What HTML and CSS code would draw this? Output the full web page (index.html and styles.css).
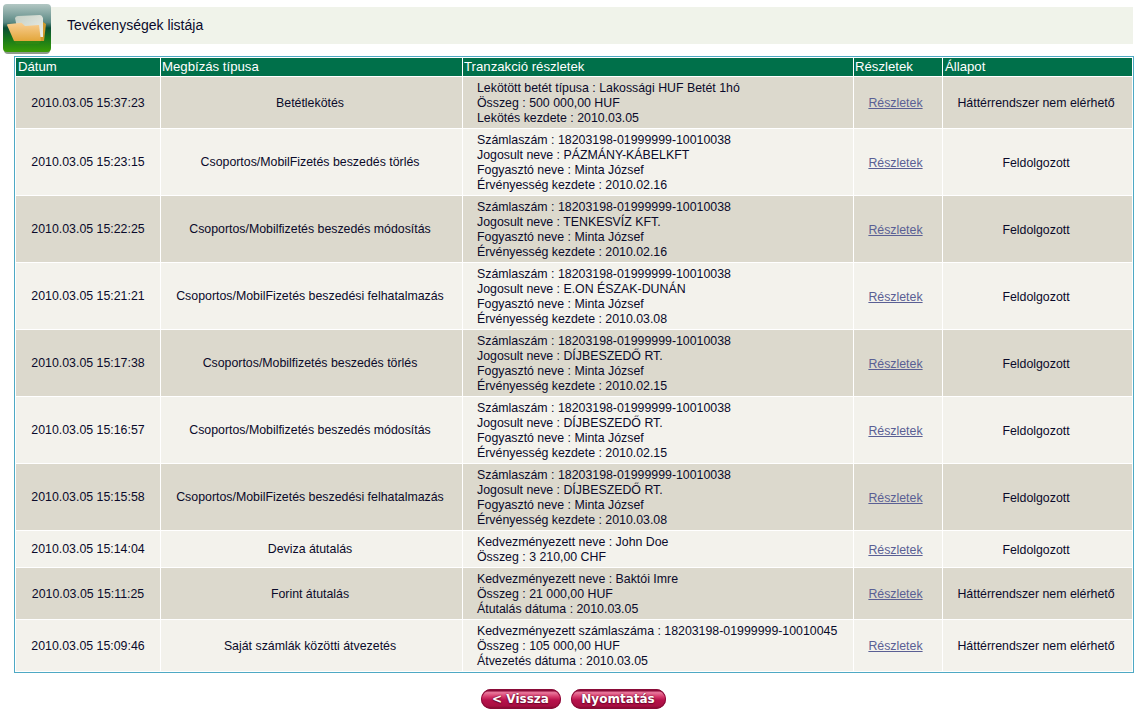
FILE: index.html
```html
<!DOCTYPE html>
<html lang="hu">
<head>
   <meta charset="UTF-8">
   <title>Tevékenységek listája</title>
   <link rel="stylesheet" href="styles.css">
</head>
<body>
   <div class="title-row">
       <div class="title-icon">
           <svg width="48" height="50" viewBox="0 0 48 50">
               <defs>
                   <linearGradient id="tile" x1="0" y1="0" x2="0" y2="1">
                       <stop offset="0" stop-color="#b2c7c3"/>
                       <stop offset="0.38" stop-color="#5d8a85"/>
                       <stop offset="0.5" stop-color="#0a4d36"/>
                       <stop offset="0.72" stop-color="#17761c"/>
                       <stop offset="1" stop-color="#3a9c05"/>
                   </linearGradient>
                   <linearGradient id="folder" x1="0" y1="0" x2="0" y2="1">
                       <stop offset="0" stop-color="#f9cf94"/>
                       <stop offset="1" stop-color="#e3a63a"/>
                   </linearGradient>
                   <linearGradient id="paper" x1="0" y1="0" x2="1" y2="1">
                       <stop offset="0" stop-color="#c4cfc4"/>
                       <stop offset="1" stop-color="#eef0ea"/>
                   </linearGradient>
               </defs>
               <rect x="1" y="2" width="46" height="48" rx="4" fill="#8d9a8d"/>
               <rect x="0" y="0" width="48" height="48" rx="4" fill="url(#tile)"/>
               <path d="M37 16 L43 20 L41 37 L36 37 Z" fill="#cf9a2c"/>
               <path d="M12 14 Q13 12 15 12 L37 11 Q39 11 40 14 L40 33 L16 33 Z" fill="url(#paper)"/>
               <path d="M4 21 Q4 20 6 20 L18.500 18.700 L22 22 L36 21 L38 37 L11 37 Z" fill="url(#folder)"/>
               <path d="M11 37 L38 37 L36 40 L13 40 Z" fill="#2f8712"/>
           </svg>
       </div>
       <div class="title-bar">Tevékenységek listája</div>
   </div>
   <div class="list-box">
       <table class="list">
           <thead>
               <tr>
                   <th class="col-date">Dátum</th>
                   <th class="col-type">Megbízás típusa</th>
                   <th class="col-info">Tranzakció részletek</th>
                   <th class="col-link">Részletek</th>
                   <th class="col-state">Állapot</th>
               </tr>
           </thead>
           <tbody>
               <tr>
                   <td class="date">2010.03.05 15:37:23</td>
                   <td class="type">Betétlekötés</td>
                   <td class="info">Lekötött betét típusa : Lakossági HUF Betét 1hó<br>Összeg : 500 000,00 HUF<br>Lekötés kezdete : 2010.03.05</td>
                   <td class="link"><a href="#">Részletek</a></td>
                   <td class="state">Háttérrendszer nem elérhető</td>
               </tr>
               <tr>
                   <td class="date">2010.03.05 15:23:15</td>
                   <td class="type">Csoportos/MobilFizetés beszedés törlés</td>
                   <td class="info">Számlaszám : 18203198-01999999-10010038<br>Jogosult neve : PÁZMÁNY-KÁBELKFT<br>Fogyasztó neve : Minta József<br>Érvényesség kezdete : 2010.02.16</td>
                   <td class="link"><a href="#">Részletek</a></td>
                   <td class="state">Feldolgozott</td>
               </tr>
               <tr>
                   <td class="date">2010.03.05 15:22:25</td>
                   <td class="type">Csoportos/Mobilfizetés beszedés módosítás</td>
                   <td class="info">Számlaszám : 18203198-01999999-10010038<br>Jogosult neve : TENKESVÍZ KFT.<br>Fogyasztó neve : Minta József<br>Érvényesség kezdete : 2010.02.16</td>
                   <td class="link"><a href="#">Részletek</a></td>
                   <td class="state">Feldolgozott</td>
               </tr>
               <tr>
                   <td class="date">2010.03.05 15:21:21</td>
                   <td class="type">Csoportos/MobilFizetés beszedési felhatalmazás</td>
                   <td class="info">Számlaszám : 18203198-01999999-10010038<br>Jogosult neve : E.ON ÉSZAK-DUNÁN<br>Fogyasztó neve : Minta József<br>Érvényesség kezdete : 2010.03.08</td>
                   <td class="link"><a href="#">Részletek</a></td>
                   <td class="state">Feldolgozott</td>
               </tr>
               <tr>
                   <td class="date">2010.03.05 15:17:38</td>
                   <td class="type">Csoportos/Mobilfizetés beszedés törlés</td>
                   <td class="info">Számlaszám : 18203198-01999999-10010038<br>Jogosult neve : DÍJBESZEDŐ RT.<br>Fogyasztó neve : Minta József<br>Érvényesség kezdete : 2010.02.15</td>
                   <td class="link"><a href="#">Részletek</a></td>
                   <td class="state">Feldolgozott</td>
               </tr>
               <tr>
                   <td class="date">2010.03.05 15:16:57</td>
                   <td class="type">Csoportos/Mobilfizetés beszedés módosítás</td>
                   <td class="info">Számlaszám : 18203198-01999999-10010038<br>Jogosult neve : DÍJBESZEDŐ RT.<br>Fogyasztó neve : Minta József<br>Érvényesség kezdete : 2010.02.15</td>
                   <td class="link"><a href="#">Részletek</a></td>
                   <td class="state">Feldolgozott</td>
               </tr>
               <tr>
                   <td class="date">2010.03.05 15:15:58</td>
                   <td class="type">Csoportos/MobilFizetés beszedési felhatalmazás</td>
                   <td class="info">Számlaszám : 18203198-01999999-10010038<br>Jogosult neve : DÍJBESZEDŐ RT.<br>Fogyasztó neve : Minta József<br>Érvényesség kezdete : 2010.03.08</td>
                   <td class="link"><a href="#">Részletek</a></td>
                   <td class="state">Feldolgozott</td>
               </tr>
               <tr>
                   <td class="date">2010.03.05 15:14:04</td>
                   <td class="type">Deviza átutalás</td>
                   <td class="info">Kedvezményezett neve : John Doe<br>Összeg : 3 210,00 CHF</td>
                   <td class="link"><a href="#">Részletek</a></td>
                   <td class="state">Feldolgozott</td>
               </tr>
               <tr>
                   <td class="date">2010.03.05 15:11:25</td>
                   <td class="type">Forint átutalás</td>
                   <td class="info">Kedvezményezett neve : Baktói Imre<br>Összeg : 21 000,00 HUF<br>Átutalás dátuma : 2010.03.05</td>
                   <td class="link"><a href="#">Részletek</a></td>
                   <td class="state">Háttérrendszer nem elérhető</td>
               </tr>
               <tr>
                   <td class="date">2010.03.05 15:09:46</td>
                   <td class="type">Saját számlák közötti átvezetés</td>
                   <td class="info">Kedvezményezett számlaszáma : 18203198-01999999-10010045<br>Összeg : 105 000,00 HUF<br>Átvezetés dátuma : 2010.03.05</td>
                   <td class="link"><a href="#">Részletek</a></td>
                   <td class="state">Háttérrendszer nem elérhető</td>
               </tr>
           </tbody>
       </table>
   </div>
   <div class="actions">
       <button class="btn btn-back">&lt; Vissza</button>
       <button class="btn btn-print">Nyomtatás</button>
   </div>
</body>
</html>
```

FILE: styles.css
```css
body {
    margin: 0;
    padding: 3px 3px 0 3px;
    font-family: "Liberation Sans", Arial, sans-serif;
    font-size: 12.35px;
    color: #0a0a2a;
    background: #fff;
}
.title-row {
    display: flex;
    align-items: flex-start;
    height: 53px;
}
.title-icon {
    width: 48px;
    height: 50px;
    margin-top: 1px;
    flex: none;
}
.title-bar {
    flex: 1;
    height: 37px;
    margin-top: 4px;
    line-height: 36px;
    padding-left: 16px;
    font-size: 14px;
    background: #f0f3ea;
}
.list-box {
    width: 1120px;
    margin-left: 11px;
    border: 1px solid #4ea9c4;
    box-sizing: border-box;
}
.list {
    width: 100%;
    table-layout: fixed;
    border-collapse: separate;
    border-spacing: 1px;
    margin: 0;
}
.list th {
    height: 18px;
    padding: 0 0 0 1px;
    text-align: left;
    font-size: 13.2px;
    line-height: 18px;
    font-weight: normal;
    color: #fff;
    background: #00704a;
}
.list th.col-date {
    width: 142px;
    padding-left: 2px;
}
.list th.col-state {
    padding-left: 2px;
}
.col-type { width: 300px; }
.col-info { width: 389px; }
.col-link { width: 87px; }
.list td {
    padding: 4px 1px 2px;
    text-align: center;
    line-height: 15px;
    vertical-align: middle;
}
.list tbody tr:nth-child(odd) td {
    background: #dcd9cd;
}
.list tbody tr:nth-child(even) td {
    background: #f3f2ec;
}
.list td.info {
    text-align: left;
    padding-left: 14px;
}
.list td.date {
    padding-top: 3.5px;
    padding-bottom: 2.5px;
}
.list td.type {
    padding: 3.5px 4px 2.5px 1px;
}
.list td.link {
    padding-right: 6px;
}
.list td.state {
    padding-right: 4px;
}
.list a {
    color: #5a5f94;
    text-decoration: underline;
}
.actions {
    display: flex;
    justify-content: center;
    gap: 10px;
    margin-top: 16px;
    padding-left: 10px;
}
.btn {
    height: 20px;
    padding: 0;
    border: 0;
    border-radius: 10px;
    font-family: "DejaVu Sans", Verdana, sans-serif;
    font-size: 12px;
    font-weight: bold;
    line-height: 20px;
    color: #fff;
    text-shadow: 0 0 2px #6d0a2c, 0 1px 1px #6d0a2c;
    background: linear-gradient(#8a0b38 0, #8a0b38 8%, #e9789c 18%, #d63a6c 38%, #b8124c 55%, #a80f42 85%, #740828 100%);
    box-shadow: inset 0 0 0 1px #8a0b38;
}
.btn-back { width: 80px; }
.btn-print { width: 95px; }
```
